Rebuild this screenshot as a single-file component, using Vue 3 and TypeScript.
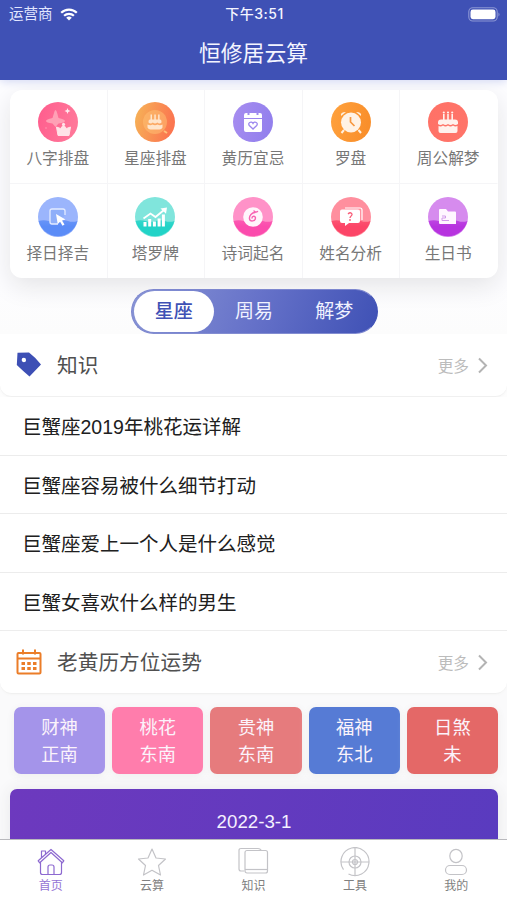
<script setup lang="ts">
import { ref } from 'vue'

interface Service { label: string; icon: string; from: string; to: string; split: boolean }
interface Direction { name: string; value: string; color: string }
interface Tab { label: string; icon: string }

const services: Service[] = [
  { label: '八字排盘', icon: 'crown', from: '#ff5c8d', to: '#ff7799', split: false },
  { label: '星座排盘', icon: 'cakeRing', from: '#f6b557', to: '#fb7650', split: false },
  { label: '黄历宜忌', icon: 'calendar', from: '#a78df0', to: '#9380ed', split: false },
  { label: '罗盘', icon: 'clock', from: '#ffa23e', to: '#f98f2b', split: false },
  { label: '周公解梦', icon: 'cake', from: '#ff7166', to: '#ff7469', split: false },
  { label: '择日择吉', icon: 'cursor', from: '#9bb5fc', to: '#5b8cf7', split: true },
  { label: '塔罗牌', icon: 'chart', from: '#80e5dc', to: '#22d3c7', split: true },
  { label: '诗词起名', icon: 'drop', from: '#ff92c8', to: '#fb4bad', split: true },
  { label: '姓名分析', icon: 'question', from: '#ff8f9e', to: '#fc4567', split: true },
  { label: '生日书', icon: 'folder', from: '#d68bee', to: '#b733df', split: true },
]
const segments: string[] = ['星座', '周易', '解梦']
const activeSegment = ref(0)
const articles: string[] = [
  '巨蟹座2019年桃花运详解',
  '巨蟹座容易被什么细节打动',
  '巨蟹座爱上一个人是什么感觉',
  '巨蟹女喜欢什么样的男生',
]
const directions: Direction[] = [
  { name: '财神', value: '正南', color: '#a494ea' },
  { name: '桃花', value: '东南', color: '#ff7dac' },
  { name: '贵神', value: '东南', color: '#e67b7d' },
  { name: '福神', value: '东北', color: '#567bd5' },
  { name: '日煞', value: '未', color: '#e46867' },
]
const tabs: Tab[] = [
  { label: '首页', icon: 'home' },
  { label: '云算', icon: 'star' },
  { label: '知识', icon: 'cards' },
  { label: '工具', icon: 'target' },
  { label: '我的', icon: 'user' },
]
const activeTab = ref(0)
</script>

<template>
  <div class="app">
    <header class="header">
      <div class="status">
        <div class="carrier">
          <span>运营商</span>
          <svg width="18" height="13" viewBox="0 0 18 13" fill="none" stroke="#fff" stroke-width="2.2">
            <path d="M1.2 4.8a11 11 0 0 1 15.6 0M4.1 7.8a7 7 0 0 1 9.8 0" />
            <path d="M9 12.6 6.2 9.8a4 4 0 0 1 5.6 0Z" fill="#fff" stroke="none" />
          </svg>
        </div>
        <div class="time">下午3:51</div>
        <div class="battery">
          <svg width="33" height="15" viewBox="0 0 33 15">
            <rect x=".8" y=".8" width="28.4" height="13.2" rx="4" fill="none" stroke="#8c96d4" stroke-width="1.1" />
            <rect x="2.5" y="2.6" width="25" height="9.6" rx="2.4" fill="#fff" />
            <path d="M30.5 5.4q2 2 0 4z" fill="#929cda" />
          </svg>
        </div>
      </div>
      <h1>恒修居云算</h1>
    </header>

    <main class="content">
      <section class="top">
        <div class="services">
          <div v-for="s in services" :key="s.label" class="service">
            <svg width="40" height="40" viewBox="0 0 40 40">
              <defs>
                <linearGradient :id="'g-' + s.icon" x1="0" y1="0" x2="1" y2=".25">
                  <stop offset="0" :stop-color="s.from" /><stop offset="1" :stop-color="s.to" />
                </linearGradient>
                <linearGradient :id="'w-' + s.icon" x1="0" y1="0" x2="0" y2="1">
                  <stop offset="0" :stop-color="s.to" stop-opacity=".8" /><stop offset=".4" :stop-color="s.to" />
                </linearGradient>
              </defs>
              <circle cx="20" cy="20" r="20" :fill="s.split ? s.from : `url(#g-${s.icon})`" />
              <path v-if="s.split" d="M.6 24q5-1.7 10 0t10 0 9.500 0 9.300 0A20 20 0 0 1 .6 24Z" :fill="`url(#w-${s.icon})`" />

              <g v-if="s.icon === 'crown'">
                <path d="M17.500 8Q18.600 8 19.300 11.500L20.500 16Q27 17.500 27 19T20.500 21.500L17.500 25 14.500 21.500Q8 20.500 8 19T14.500 16L16 11Q16.700 8 17.500 8Z" fill="#ffa0b5" />
                <path d="m29.500 6 .8 2.100 2.200.9-2.200.9-.8 2.100-.8-2.100-2.200-.9 2.200-.9z" fill="#ffe9ee" />
                <path d="M18.500 25 22.500 26.500 25.500 23 28.500 26.500 32.500 25 31 33.500H20Z" fill="#ffe3e7" stroke="#ffe3e7" stroke-linejoin="round" />
                <circle cx="25.500" cy="22.300" r="1.500" fill="#ffe3e7" /><circle cx="8" cy="26" r=".8" fill="#ff99b2" />
              </g>
              <g v-else-if="s.icon === 'cakeRing'" fill="#ffe5cb">
                <circle cx="20" cy="20" r="12" fill="#ffc073" fill-opacity=".55" />
                <path d="M29 29l3 2" stroke="#ffc17b" stroke-width="2" />
                <path d="M15.500 12.500h1.500V18h-1.500zm3.800 0h1.500V18h-1.500zm3.800 0h1.500V18h-1.500zM15 17.500h10q1.500 0 1.500 2v1q-2 1.800-4.200 0-2.200 1.800-4.500 0-2 1.800-4.300 0v-1q0-2 1.500-2ZM12.500 22.500q3 1.500 5 0 2.500 1.500 5 0 2.500 1.500 5 0v3q-1 2-3 2h-9q-2 0-3-2z" />
              </g>
              <g v-else-if="s.icon === 'calendar'">
                <path d="M13 11h14q2 0 2 2v3H11v-3q0-2 2-2Zm-2 6h18v11q0 2-2 2H13q-2 0-2-2Z" fill="#fff" />
                <path d="M15.500 10v3m9-3v3" stroke="#9e8aef" stroke-width="2" />
                <path d="m20 27-3.700-3.500c-2-2.500 2-5 3.700-2 1.700-3 5.700-.5 3.700 2Z" fill="none" stroke="#9b86ee" stroke-width="1.300" />
              </g>
              <g v-else-if="s.icon === 'clock'">
                <path d="m13 28-2.500 3m17-3 2.500 3" stroke="#fff0df" stroke-width="2" />
                <path d="M10 14q-1-4 5-4zm20 0q1-4-5-4z" fill="#fff0df" />
                <circle cx="20" cy="20.500" r="10" fill="#fff2e5" />
                <path d="M19.500 15v5l4 4" fill="none" stroke="#f7973f" stroke-width="1.700" />
              </g>
              <g v-else-if="s.icon === 'cake'" fill="#fff1ed">
                <path d="M15 12h1.600v7H15zm4.200 0h1.600v7h-1.600zm4.200 0H25v7h-1.600zM13 17.500h14q3 0 3 3V22q-2.500 2-5 0-2.500 2-5 0-2.500 2-5 0-2.500 2-5 0v-1.500q0-3 3-3ZM10.500 24q2.500 1 4.500-.5 2.500 2 5 0 2.500 2 5 0 2 1.500 4.500.5v5q0 2-2 2h-15q-2 0-2-2Z" />
                <circle cx="15.800" cy="10.500" r="1.100" /><circle cx="20" cy="10.500" r="1.100" /><circle cx="24.200" cy="10.500" r="1.100" />
              </g>
              <g v-else-if="s.icon === 'cursor'">
                <path d="M20 27h-6q-2 0-2-2V14q0-2 2-2h11q2 0 2 2v4" fill="#8faff9" stroke="#e3ebff" stroke-width="1.300" />
                <path d="m18 17 9.500 5.500-3.500 1 2.500 4-2 1.200-2.400-4-2.400 2.300z" fill="#fff" />
              </g>
              <g v-else-if="s.icon === 'chart'" fill="#fff">
                <path d="M8.500 25h3v4.500h-3zm4.700-3h3v7.500h-3zm4.700 2.500h3v5h-3zm4.700-3h3v8h-3zm4.300-4h3v12h-3z" />
                <path d="m8.500 21.500 7-5 5 3.500 8.500-7" fill="none" stroke="#fff" stroke-width="1.800" /><path d="m25.500 11.500 6.500-1-1 6.300z" />
              </g>
              <g v-else-if="s.icon === 'drop'">
                <circle cx="20" cy="20" r="9.800" fill="#fff5fb" />
                <path d="M22 15.500c-3 0-6 3-5.500 6.300.5 3.200 6 2.700 6-.7 0-2.700-3.500-2.300-3.500 0M21 14q2 1.800 3.500.5" fill="none" stroke="#f863b2" stroke-width="1.400" stroke-linecap="round" />
              </g>
              <g v-else-if="s.icon === 'question'">
                <path d="M14 11h15q2 0 2 2v10" fill="none" stroke="#fff" stroke-width="1.200" />
                <path d="M11 12.500h16q2 0 2 2V24q0 2-2 2H18l-4 3v-3h-3q-2 0-2-2v-9.500q0-2 2-2Z" fill="#fff" />
                <path d="M17 17q2.500-2.500 4 0c.7 1.600-2 2-2 4" fill="none" stroke="#f95b77" stroke-width="1.300" /><circle cx="19" cy="23" r=".9" fill="#f95b77" />
              </g>
              <g v-else>
                <path d="M11 13q0-1 1-1h6l2 2.500h7q1 0 1 1V27H12q-1 0-1-1Z" fill="#fff6ff" />
                <path d="M14 19h3.500v2H14v2.500h7" fill="none" stroke="#d29bea" stroke-width="1" />
              </g>
            </svg>
            <span>{{ s.label }}</span>
          </div>
        </div>

        <div class="segmented">
          <button v-for="(name, i) in segments" :key="name" :class="{ active: i === activeSegment }" @click="activeSegment = i">{{ name }}</button>
        </div>
      </section>

      <section>
        <div class="section-head">
          <svg class="head-icon" width="26" height="26" viewBox="0 0 26 26"><path fill-rule="evenodd" d="M1.500.8 13 .6Q20 6 25 12.500L13.500 24.500Q7 19 .8 13Zm6.300 5a2.200 2.200 0 1 0 .1 4.400 2.200 2.200 0 0 0-.1-4.400Z" fill="#3d4fb5" /></svg>
          <h2>知识</h2>
          <span class="more">更多</span>
          <svg width="10" height="17" viewBox="0 0 10 17"><path d="m1 1.500 7 7-7 7" fill="none" stroke="#b3b3b3" stroke-width="2" /></svg>
        </div>
        <ul class="articles"><li v-for="a in articles" :key="a">{{ a }}</li></ul>
      </section>

      <section class="almanac">
        <div class="section-head">
          <svg class="head-icon" width="26" height="26" viewBox="0 0 26 26" fill="none" stroke="#eb7d28">
            <rect x="1.500" y="4" width="23" height="20.500" rx="1" stroke-width="2" />
            <path d="M2 9.500h22M7 .5v5M19 .5v5" stroke-width="2" />
            <path d="M5.500 14.500h15M5.500 19.500h15" stroke-width="3" stroke-dasharray="3.500 2.250" />
          </svg>
          <h2>老黄历方位运势</h2>
          <span class="more">更多</span>
          <svg width="10" height="17" viewBox="0 0 10 17"><path d="m1 1.500 7 7-7 7" fill="none" stroke="#b3b3b3" stroke-width="2" /></svg>
        </div>
        <div class="directions">
          <div v-for="d in directions" :key="d.name" class="direction" :style="{ backgroundColor: d.color }">
            <span>{{ d.name }}</span><span>{{ d.value }}</span>
          </div>
        </div>
        <div class="date-card">2022-3-1</div>
      </section>
    </main>

    <nav class="tabbar">
      <button v-for="(t, i) in tabs" :key="t.label" :class="{ active: i === activeTab }" @click="activeTab = i">
        <svg width="32" height="30" viewBox="0 0 32 30" fill="none" stroke="currentColor" stroke-width="1.200" stroke-linejoin="round">
          <g v-if="t.icon === 'home'">
            <path d="M5.500 15.500v10q0 2 2 2h17q2 0 2-2v-10M3.200 13.800 16 2.500l12.800 11.300-1.500 2L16 5.500 4.700 15.800ZM6.500 10.500V4h4v3M13 27v-7q0-2 2-2h2q2 0 2 2v7" />
          </g>
          <path v-else-if="t.icon === 'star'" d="m16 2 4 9 9.500 1-7 6.500 2 9.500-8.500-4.700L7.500 28l2-9.500-7-6.500L12 11Z" />
          <g v-else-if="t.icon === 'cards'">
            <path d="M7 24H4q-2 0-2-2V3.500q0-2 2-2h17q2 0 3.500 2" /><rect x="8" y="3.500" width="22.500" height="22.500" rx="2" /><path d="M8 22.500h22" />
          </g>
          <g v-else-if="t.icon === 'target'">
            <path d="M4.500 22.600A14 14 0 1 1 9.500 27" /><path d="M2 15h28M16 1v28" /><circle cx="16" cy="15" r="6" /><circle cx="16" cy="15" r="2.500" />
          </g>
          <g v-else><ellipse cx="16" cy="9" rx="6.200" ry="6.700" /><rect x="5.500" y="18.500" width="21" height="9" rx="4.500" /></g>
        </svg>
        <span>{{ t.label }}</span>
      </button>
    </nav>
  </div>
</template>

<style>
body { margin: 0; background: #fff; }
</style>

<style scoped>
* { box-sizing: border-box; }
.app { width: 100%; height: 900px; display: flex; flex-direction: column; overflow: hidden; background: #fdfdfd; font-family: "Liberation Sans", "Noto Sans CJK SC", sans-serif; }
button { border: 0; padding: 0; background: none; font-family: inherit; }
.header { flex: none; height: 80px; background: #3f51b5; color: #f4f5ff; box-shadow: 0 1px 9px #cdd3f2; z-index: 1; }
.status { height: 27px; padding: 0 6px 0 9px; display: grid; grid-template-columns: 1fr auto 1fr; align-items: center; font-size: 14.5px; line-height: 28px; }
.carrier { display: flex; align-items: center; gap: 7px; color: #e2e6ff; }
.time { padding-right: 1px; font-family: Inter, "Noto Sans CJK SC", sans-serif; font-size: 14px; font-weight: 500; letter-spacing: .5px; }
.battery { display: flex; justify-content: flex-end; }
h1 { margin: 0; height: 53px; font-size: 21.8px; line-height: 54px; font-weight: 400; text-align: center; }
.content { flex: 1; min-height: 0; overflow: hidden; }
.top { height: 254px; padding: 10px 9px 0 10px; background: linear-gradient(#fdfdff 0 80%, #fcfcfc); }
.services { height: 188px; display: grid; grid-template-columns: repeat(5, 1fr); grid-template-rows: 94px 94px; border-radius: 12px; overflow: hidden; background: #fff; box-shadow: 0 8px 26px #e4e4e6; }
.service { display: flex; flex-direction: column; align-items: center; padding-top: 12px; border-right: 1px solid #f5f5f7; border-bottom: 1px solid #f5f5f7; }
.service:nth-child(5n) { border-right-color: transparent; }
.service:nth-child(n + 6) { padding-top: 13px; border-bottom: 0; }
.service svg { margin-left: -1px; }
.service span { margin: 5px 0 0 -1px; font-size: 15.7px; line-height: 24px; color: #777; white-space: nowrap; }
.segmented { width: 247px; height: 45px; margin: 11px auto 0; padding: 1px 2px; display: grid; grid-template-columns: repeat(3, 1fr); border: 1px solid #7d87cf; border-right-color: #3f51b5; border-radius: 23px; background: linear-gradient(110deg, #8995d5, #6672c9 50%, #3f51b5); }
.segmented button { border-radius: 21px; color: #f0f2ff; font-size: 19px; line-height: 41px; }
.segmented .active { background: #fff; color: #3f51b5; font-weight: 500; }
.section-head { height: 63px; padding: 0 19px 0 16px; display: flex; align-items: center; border-bottom: 1px solid #f0f0f0; border-radius: 0 0 12px 12px; background: #fff; box-shadow: 0 1px 2px #f6f6f6; }
.head-icon { flex: none; }
h2 { flex: 1; margin: 2px 0 0 15px; font-size: 20.7px; line-height: 30px; font-weight: 400; color: #505050; }
.more { margin-right: 9px; font-size: 15.7px; color: #bcbcbc; }
.articles { margin: 0; padding: 0; list-style: none; background: #fff; }
.articles li { height: 58.5px; padding-left: 22px; border-bottom: 1px solid #ececec; font-size: 19.5px; line-height: 60px; color: #202020; }
.almanac { background: #fafafb; }
.directions { height: 95px; padding: 13px 9px 15px 14px; display: grid; grid-template-columns: repeat(5, 1fr); gap: 7px; }
.direction { padding-top: 7px; display: flex; flex-direction: column; border-radius: 7px; color: #fbf3fb; font-size: 18.3px; line-height: 27px; text-align: center; box-shadow: 0 2px 8px #eee; }
.date-card { height: 150px; margin: 0 9px 0 10px; border-radius: 7px 7px 0 0; background: linear-gradient(100deg, #6d39be, #593bbf); color: #f4f1ff; font-size: 18.7px; line-height: 66px; text-align: center; box-shadow: 0 0 16px #e8e8ea; }
.tabbar { flex: none; height: 61px; display: grid; grid-template-columns: repeat(5, 1fr); border-top: 1px solid #b9b9bd; background: #fff; z-index: 1; }
.tabbar button { padding-top: 7px; display: flex; flex-direction: column; align-items: center; color: #c3c3c7; }
.tabbar span { font-size: 12px; line-height: 18px; color: #808080; }
.tabbar .active { color: #8d69d0; }
.tabbar .active span { color: #9673d5; }
</style>
